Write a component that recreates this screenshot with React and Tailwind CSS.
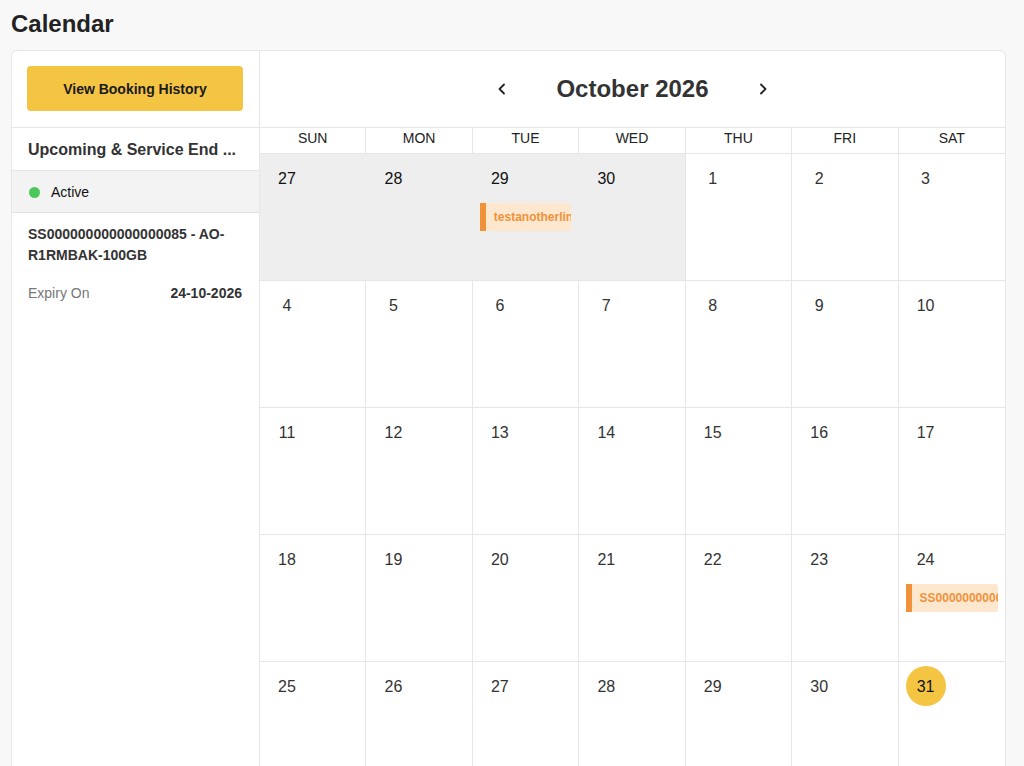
import React from "react";

const weeks = [
  [
    { d: 27, prev: true },
    { d: 28, prev: true },
    { d: 29, prev: true, ev: { text: "testanotherline", bold: true } },
    { d: 30, prev: true },
    { d: 1 },
    { d: 2 },
    { d: 3 },
  ],
  [4, 5, 6, 7, 8, 9, 10].map((d) => ({ d })),
  [11, 12, 13, 14, 15, 16, 17].map((d) => ({ d })),
  [
    { d: 18 },
    { d: 19 },
    { d: 20 },
    { d: 21 },
    { d: 22 },
    { d: 23 },
    { d: 24, ev: { text: "SS000000000000000085 - AO-R1RMBAK-100GB" } },
  ],
  [
    { d: 25 },
    { d: 26 },
    { d: 27 },
    { d: 28 },
    { d: 29 },
    { d: 30 },
    { d: 31, today: true },
  ],
];

const days = ["SUN", "MON", "TUE", "WED", "THU", "FRI", "SAT"];

function Chevron({ dir }) {
  return (
    <svg width="12" height="14" viewBox="0 0 12 14" fill="none">
      {dir === "left" ? (
        <path d="M8 2.5L3.5 7L8 11.5" stroke="#222" strokeWidth="1.8" strokeLinecap="round" strokeLinejoin="round" />
      ) : (
        <path d="M4 2.5L8.5 7L4 11.5" stroke="#222" strokeWidth="1.8" strokeLinecap="round" strokeLinejoin="round" />
      )}
    </svg>
  );
}

export default function App() {
  return (
    <div
      className="min-h-screen bg-[#f8f8f8] pl-[11px] pt-[9px] text-[#222]"
      style={{ fontFamily: '"Liberation Sans", Arial, sans-serif' }}
    >
      <h1 className="text-[24px] font-bold leading-[30px] text-[#222]">Calendar</h1>
      <div className="mt-[11px] flex w-[995px] rounded-[6px] border border-[#e8e8e8] bg-white">
        {/* Sidebar */}
        <div className="w-[248px] shrink-0 border-r border-[#e6e6e6]">
          <div className="border-b border-[#e6e6e6] pl-[15px] pr-[16px] pt-[15px] pb-[16px]">
            <button className="flex h-[45px] w-full items-center justify-center rounded-[4px] bg-[#f4c443] pt-[1px] text-[14px] font-bold text-[#1a1a1a]">
              View Booking History
            </button>
          </div>
          <div className="flex h-[43px] items-center border-b border-[#e6e6e6] px-[16px] pt-[2px] text-[16px] font-bold text-[#333]">
            Upcoming &amp; Service End ...
          </div>
          <div className="flex h-[42px] items-center gap-[11px] border-b border-[#e2e2e2] bg-[#f3f3f3] px-[17px] pt-[1px] text-[14px] font-medium text-[#111]">
            <span className="h-[11px] w-[11px] rounded-full bg-[#4cc85a]" />
            Active
          </div>
          <div className="pl-[16px] pr-[16px] pt-[11px]">
            <div className="text-[14px] font-bold leading-[21px] text-[#333]">
              SS000000000000000085 - AO-R1RMBAK-100GB
            </div>
            <div className="mt-[17px] flex items-center justify-between text-[14px]">
              <span className="text-[#777]">Expiry On</span>
              <span className="pr-[1px] font-bold text-[#333]">24-10-2026</span>
            </div>
          </div>
        </div>

        {/* Calendar */}
        <div className="min-w-0 flex-1">
          <div className="flex h-[77px] items-center justify-center gap-[48px] border-b border-[#e6e6e6]">
            <button className="flex items-center">
              <Chevron dir="left" />
            </button>
            <div className="text-[24px] font-bold text-[#333]">October 2026</div>
            <button className="flex items-center">
              <Chevron dir="right" />
            </button>
          </div>
          <div className="grid grid-cols-7 border-b border-[#e6e6e6]">
            {days.map((d, i) => (
              <div
                key={d}
                className={
                  "flex h-[25px] items-center justify-center pb-[5px] text-[14px] text-[#222] " +
                  (i < 6 ? "border-r border-[#e6e6e6]" : "")
                }
              >
                {d}
              </div>
            ))}
          </div>
          {weeks.map((w, wi) => (
            <div key={wi} className="grid grid-cols-7 border-b border-[#e6e6e6]">
              {w.map((c, ci) => {
                const lastPrev = c.prev && !(w[ci + 1] && w[ci + 1].prev);
                return (
                  <div
                    key={ci}
                    className={
                      "h-[126px] min-w-0 overflow-hidden px-[7px] pt-[4px] " +
                      (c.prev ? "bg-[#eeeeee] " : "") +
                      (ci < 6 ? (c.prev && !lastPrev ? "border-r border-[#eeeeee]" : "border-r border-[#e6e6e6]") : "")
                    }
                  >
                    <div
                      className={
                        "flex h-10 w-10 items-center justify-center rounded-full pt-[1px] text-[16px] " +
                        (c.today ? "bg-[#f4c443] text-[#111]" : c.prev ? "text-[#111]" : "text-[#333]")
                      }
                    >
                      {c.d}
                    </div>
                    {c.ev && (
                      <div className="mt-[5px] flex h-[28px] items-center overflow-hidden rounded-r-[3px] border-l-[6px] border-[#f0923a] bg-[#fde8cf] pl-[8px]">
                        <span className="whitespace-nowrap text-[12px] font-bold text-[#f0923a]">
                          {c.ev.text}
                        </span>
                      </div>
                    )}
                  </div>
                );
              })}
            </div>
          ))}
        </div>
      </div>
    </div>
  );
}
